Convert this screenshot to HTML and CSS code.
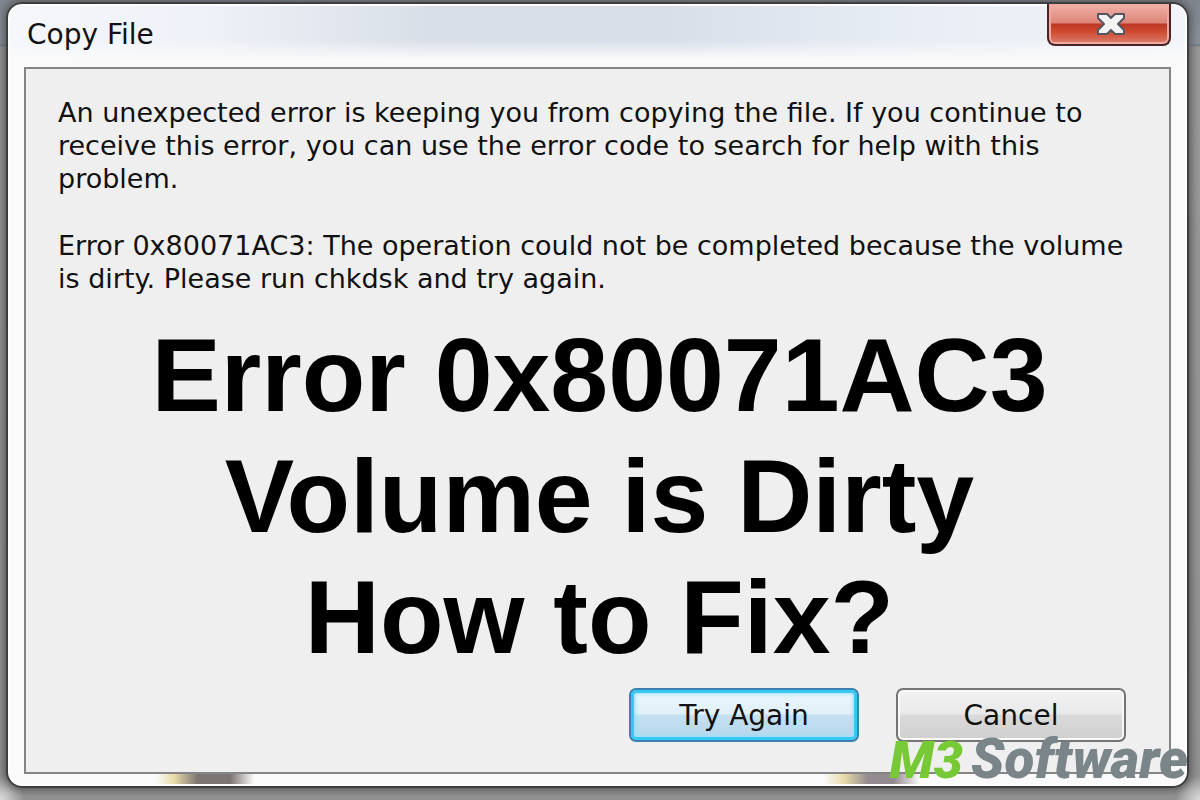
FILE: index.html
```
<!DOCTYPE html>
<html lang="en">
<head>
  <meta charset="UTF-8">
  <meta name="viewport" content="width=device-width, initial-scale=1">
  <title>Copy File</title>
  <link rel="stylesheet" href="styles.css">
</head>
<body>

<div class="window">
  <div class="title-bar">
    <span class="title">Copy File</span>
    <button class="close" type="button" aria-label="Close">
      <svg width="30" height="24" viewBox="0 0 30 24">
        <path d="M2 2h9l4 4 4-4h9v4l-6 6 6 6v4h-9l-4-4-4 4h-9v-4l6-6-6-6z" fill="#f3f3f5" stroke="#555563" stroke-width="2" stroke-linejoin="round"/>
      </svg>
    </button>
  </div>

  <div class="content">
    <p>An unexpected error is keeping you from copying the file. If you continue to<br>receive this error, you can use the error code to search for help with this<br>problem.</p>
    <p>Error 0x80071AC3: The operation could not be completed because the volume<br>is dirty. Please run chkdsk and try again.</p>
    <h1>Error 0x80071AC3<br>Volume is Dirty<br>How to Fix?</h1>
    <div class="buttons">
      <button class="btn btn-default" type="button">Try Again</button>
      <button class="btn" type="button">Cancel</button>
    </div>
  </div>
</div>

<div class="logo"><span class="logo-m3">M3</span><span>Software</span></div>

</body>
</html>
```
FILE: styles.css
```
* {
  box-sizing: border-box;
}
body {
  margin: 0;
  min-height: 100vh;
  padding: 2px 11px 12px 6px;
  display: flex;
  position: relative;
  font-family: "DejaVu Sans", Verdana, sans-serif;
  color: #111;
  background:
    radial-gradient(circle at 0 100%, #ddd, transparent 24px),
    radial-gradient(circle at 100% 100%, #ddd, transparent 24px),
    linear-gradient(#7f868e 0, #8b929c 44px, #687586 45px, #999 47px, #939393 100%);
}
.window {
  flex: 1;
  display: flex;
  flex-direction: column;
  padding: 0 16px 12px;
  border: 2px solid #3c3e42;
  border-radius: 16px;
  background:
    linear-gradient(90deg, transparent 148px, #e6dba8 166px, #7c7573 190px, #7c7573 222px, transparent 246px) 0 calc(100% - 2px) / 100% 10px no-repeat,
    linear-gradient(90deg, transparent 816px, #e6dba8 836px, #948b90 860px, #948b90 886px, transparent 912px) 0 calc(100% - 2px) / 100% 10px no-repeat,
    linear-gradient(transparent 36px, #fafafa 56px),
    linear-gradient(90deg, #f5f7fb 0, #eef1f7 200px, #d9dfe8 420px, #d8dfe9 660px, #e8edf5 900px, #f2f4f8 100%);
  box-shadow: inset 0 0 0 2px #fff, 0 0 8px 2px #555;
}
.title-bar {
  height: 63px;
  display: flex;
  justify-content: space-between;
  align-items: flex-start;
}
.title {
  padding-left: 3px;
  font-size: 28px;
  line-height: 62px;
}
.close {
  width: 124px;
  height: 42px;
  display: flex;
  justify-content: center;
  align-items: flex-start;
  padding: 8px 0 0 4px;
  border: 2px solid #4a2426;
  border-top: 0;
  border-radius: 0 0 8px 8px;
  background: linear-gradient(#efb3ab 0, #df8377 19px, #bd3724 20px, #cf4b31 28px, #dc8270 100%);
  box-shadow: inset 0 0 0 2px #f0aaa0;
}
.content {
  flex: 1;
  display: flex;
  flex-direction: column;
  padding: 27px 16px 30px 32px;
  border: 2px solid #858585;
  background: #efefef;
}
p {
  margin: 0 0 34px;
  font-size: 27px;
  line-height: 33px;
  white-space: nowrap;
}
h1 {
  margin: -14px 12px 0 0;
  font-family: "Liberation Sans", Arial, sans-serif;
  font-size: 104px;
  line-height: 121px;
  text-align: center;
  color: #000;
}
.buttons {
  display: flex;
  justify-content: flex-end;
  gap: 37px;
  margin-top: auto;
  padding-right: 27px;
}
.btn {
  width: 230px;
  height: 54px;
  padding: 0;
  border: 2px solid #747474;
  border-radius: 7px;
  font-family: inherit;
  font-size: 28px;
  line-height: 33px;
  color: #111;
  background: linear-gradient(#f2f2f2 0, #e9e9e9 48%, #dadada 50%, #cfcfcf 100%);
  box-shadow: inset 0 0 0 2px #f8f8f8;
}
.btn-default {
  border-color: #3c7fb1;
  background: linear-gradient(#edf6fc 0, #e1f0f9 48%, #c6e0f1 50%, #b2d7ed 100%);
  box-shadow: inset 0 0 0 3px #35c8f5, inset 0 0 4px 4px #9adff8;
}
/* watermark over the corner of the window */
.logo {
  position: absolute;
  right: 12px;
  bottom: 9px;
  display: flex;
  align-items: baseline;
  gap: 8px;
  font-family: Roboto, sans-serif;
  font-size: 55px;
  font-weight: 900;
  font-style: italic;
  line-height: 60px;
  color: #7a858a;
}
.logo-m3 {
  font-size: 52px;
  color: #78c936;
}
```
